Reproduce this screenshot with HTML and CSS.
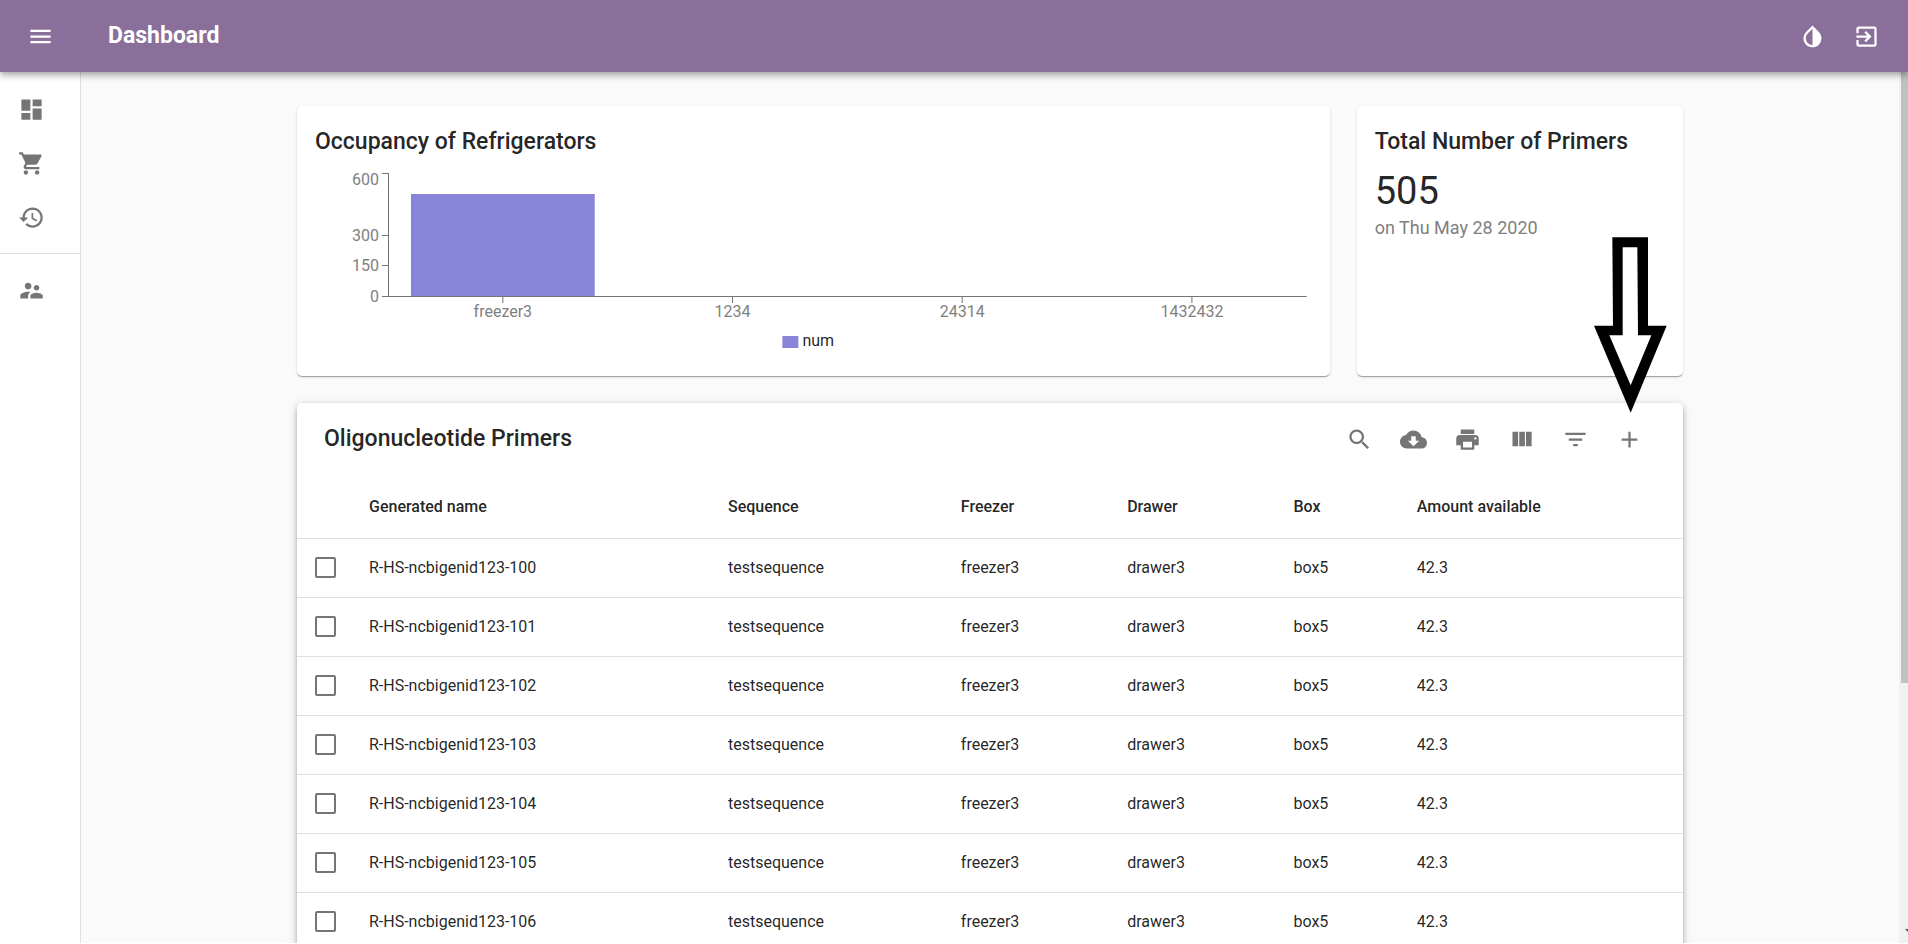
FILE: index.html
```html
<!DOCTYPE html>
<html lang="en">
<head>
<meta charset="utf-8">
<title>Dashboard</title>
<link rel="stylesheet" href="styles.css">
</head>
<body>
<div class="app">
  <header class="appbar">
    <button class="icon-button" type="button" aria-label="Toggle menu">
      <svg class="icon" viewBox="0 0 24 24"><path d="M3 18h18v-2H3v2zm0-5h18v-2H3v2zm0-7v2h18V6H3z"/></svg>
    </button>
    <h1 class="appbar-title">Dashboard</h1>
    <button class="icon-button" type="button" aria-label="Toggle theme">
      <svg class="icon" viewBox="0 0 24 24"><path d="M17.66 7.93L12 2.27 6.34 7.93c-3.12 3.12-3.12 8.19 0 11.31C7.9 20.8 9.95 21.58 12 21.58c2.05 0 4.1-.78 5.66-2.34 3.12-3.12 3.12-8.19 0-11.31zM12 19.59c-1.6 0-3.11-.62-4.24-1.76C6.62 16.69 6 15.19 6 13.59s.62-3.11 1.76-4.24L12 5.1v14.49z"/></svg>
    </button>
    <button class="icon-button" type="button" aria-label="Log out">
      <svg class="icon" viewBox="0 0 24 24"><path d="M10.09 15.59L11.5 17l5-5-5-5-1.41 1.41L12.67 11H3v2h9.67l-2.58 2.59zM19 3H5c-1.11 0-2 .9-2 2v4h2V5h14v14H5v-4H3v4c0 1.1.89 2 2 2h14c1.1 0 2-.9 2-2V5c0-1.1-.9-2-2-2z"/></svg>
    </button>
  </header>

  <div class="body">
    <nav class="drawer" aria-label="Main">
      <div class="nav-group">
        <a class="nav-item" href="#dashboard" aria-label="Dashboard"><svg class="icon" viewBox="0 0 24 24"><path d="M3 13h8V3H3v10zm0 8h8v-6H3v6zm10 0h8V11h-8v10zm0-18v6h8V3h-8z"/></svg></a>
        <a class="nav-item" href="#orders" aria-label="Orders"><svg class="icon" viewBox="0 0 24 24"><path d="M7 18c-1.1 0-1.99.9-1.99 2S5.9 22 7 22s2-.9 2-2-.9-2-2-2zM1 2v2h2l3.6 7.59-1.35 2.45c-.16.28-.25.61-.25.96 0 1.1.9 2 2 2h12v-2H7.42c-.14 0-.25-.11-.25-.25l.03-.12.9-1.63h7.45c.75 0 1.41-.41 1.75-1.03l3.58-6.49c.08-.14.12-.31.12-.48 0-.55-.45-1-1-1H5.21l-.94-2H1zm16 16c-1.1 0-1.99.9-1.99 2s.89 2 1.99 2 2-.9 2-2-.9-2-2-2z"/></svg></a>
        <a class="nav-item" href="#history" aria-label="History"><svg class="icon" viewBox="0 0 24 24"><path d="M13 3c-4.97 0-9 4.03-9 9H1l3.89 3.89.07.14L9 12H6c0-3.87 3.13-7 7-7s7 3.13 7 7-3.13 7-7 7c-1.93 0-3.68-.79-4.94-2.06l-1.42 1.42C8.27 19.99 10.51 21 13 21c4.97 0 9-4.03 9-9s-4.03-9-9-9zm-1 5v5l4.28 2.54.72-1.21-3.5-2.08V8H12z"/></svg></a>
      </div>
      <div class="nav-group">
        <a class="nav-item" href="#users" aria-label="Users"><svg class="icon" viewBox="0 0 24 24"><path d="M16.5 12c1.38 0 2.49-1.12 2.49-2.5S17.88 7 16.5 7 14 8.12 14 9.5s1.12 2.5 2.5 2.5zM9 11c1.66 0 2.99-1.34 2.99-3S10.66 5 9 5 6 6.34 6 8s1.34 3 3 3zm7.5 3c-1.83 0-5.5.92-5.5 2.75V19h11v-2.25c0-1.83-3.67-2.75-5.5-2.75zM9 13c-2.33 0-7 1.17-7 3.5V19h7v-2.25c0-.85.33-2.34 2.37-3.47C10.5 13.1 9.66 13 9 13z"/></svg></a>
      </div>
    </nav>

    <main class="main">
      <div class="container">
        <section class="card card-chart">
          <h2 class="title">Occupancy of Refrigerators</h2>
          <svg class="chart" role="img" aria-label="Occupancy of refrigerators">
            <g class="axis">
              <path d="M67 5.5h6.5M67 67.500h6.500M67 97.500h6.500M67 128.500h6.500M73.500 5v124"/>
            </g>
            <g class="tick tick-y">
              <text x="64" y="17">600</text>
              <text x="64" y="73">300</text>
              <text x="64" y="103">150</text>
              <text x="64" y="134">0</text>
            </g>
            <svg class="plot" x="73">
              <rect class="bar" x="2.5%" y="26" width="20%" height="103"/>
              <g class="axis">
                <line x1="0" y1="128.500" x2="100%" y2="128.500"/>
                <line x1="12.5%" y1="129" x2="12.5%" y2="135"/>
                <line x1="37.5%" y1="129" x2="37.5%" y2="135"/>
                <line x1="62.5%" y1="129" x2="62.5%" y2="135"/>
                <line x1="87.5%" y1="129" x2="87.5%" y2="135"/>
              </g>
              <g class="tick tick-x">
                <text x="12.5%" y="149">freezer3</text>
                <text x="37.5%" y="149">1234</text>
                <text x="62.5%" y="149">24314</text>
                <text x="87.5%" y="149">1432432</text>
              </g>
            </svg>
            <svg class="legend" x="50%">
              <rect class="bar" x="-31" y="168" width="16" height="12"/>
              <text x="-11" y="178">num</text>
            </svg>
          </svg>
        </section>

        <section class="card card-total">
          <h2 class="title">Total Number of Primers</h2>
          <p class="total">505</p>
          <p class="total-date">on Thu May 28 2020</p>
        </section>

        <section class="card card-table">
          <div class="toolbar">
            <h2 class="title toolbar-title">Oligonucleotide Primers</h2>
            <button class="icon-button" type="button" aria-label="Search"><svg class="icon" viewBox="0 0 24 24"><path d="M15.5 14h-.79l-.28-.27C15.41 12.590 16 11.110 16 9.500 16 5.910 13.090 3 9.500 3S3 5.910 3 9.500 5.910 16 9.500 16c1.610 0 3.090-.59 4.230-1.570l.27.28v.79l5 4.990L20.490 19l-4.990-5zm-6 0C7.010 14 5 11.990 5 9.500S7.010 5 9.500 5 14 7.010 14 9.500 11.990 14 9.500 14z"/></svg></button>
            <button class="icon-button" type="button" aria-label="Download"><svg class="icon" viewBox="0 0 24 24"><path d="M19.350 10.040C18.670 6.590 15.640 4 12 4 9.110 4 6.600 5.640 5.350 8.040 2.340 8.360 0 10.910 0 14c0 3.310 2.690 6 6 6h13c2.760 0 5-2.240 5-5 0-2.640-2.050-4.780-4.650-4.960zM17 13l-5 5-5-5h3V9h4v4h3z"/></svg></button>
            <button class="icon-button" type="button" aria-label="Print"><svg class="icon" viewBox="0 0 24 24"><path d="M19 8H5c-1.660 0-3 1.340-3 3v6h4v4h12v-4h4v-6c0-1.660-1.340-3-3-3zm-3 11H8v-5h8v5zm3-7c-.55 0-1-.45-1-1s.45-1 1-1 1 .45 1 1-.45 1-1 1zm-1-9H6v4h12V3z"/></svg></button>
            <button class="icon-button" type="button" aria-label="View columns"><svg class="icon" viewBox="0 0 24 24"><path d="M10 18h5V5h-5v13zm-6 0h5V5H4v13zM16 5v13h5V5h-5z"/></svg></button>
            <button class="icon-button" type="button" aria-label="Filter"><svg class="icon" viewBox="0 0 24 24"><path d="M10 18h4v-2h-4v2zM3 6v2h18V6H3zm3 7h12v-2H6v2z"/></svg></button>
            <button class="icon-button" type="button" aria-label="Add primer"><svg class="icon" viewBox="0 0 24 24"><path d="M19 13h-6v6h-2v-6H5v-2h6V5h2v6h6v2z"/></svg></button>
          </div>
          <table class="table">
            <colgroup><col class="col-check"><col class="col-name"><col class="col-seq"><col class="col-freezer"><col class="col-drawer"><col class="col-box"><col></colgroup>
            <thead>
              <tr><td></td><th scope="col">Generated name</th><th scope="col">Sequence</th><th scope="col">Freezer</th><th scope="col">Drawer</th><th scope="col">Box</th><th scope="col">Amount available</th></tr>
            </thead>
            <tbody>
              <tr><td class="check"><input type="checkbox" id="p100"></td><td><label for="p100">R-HS-ncbigenid123-100</label></td><td>testsequence</td><td>freezer3</td><td>drawer3</td><td>box5</td><td>42.3</td></tr>
              <tr><td class="check"><input type="checkbox" id="p101"></td><td><label for="p101">R-HS-ncbigenid123-101</label></td><td>testsequence</td><td>freezer3</td><td>drawer3</td><td>box5</td><td>42.3</td></tr>
              <tr><td class="check"><input type="checkbox" id="p102"></td><td><label for="p102">R-HS-ncbigenid123-102</label></td><td>testsequence</td><td>freezer3</td><td>drawer3</td><td>box5</td><td>42.3</td></tr>
              <tr><td class="check"><input type="checkbox" id="p103"></td><td><label for="p103">R-HS-ncbigenid123-103</label></td><td>testsequence</td><td>freezer3</td><td>drawer3</td><td>box5</td><td>42.3</td></tr>
              <tr><td class="check"><input type="checkbox" id="p104"></td><td><label for="p104">R-HS-ncbigenid123-104</label></td><td>testsequence</td><td>freezer3</td><td>drawer3</td><td>box5</td><td>42.3</td></tr>
              <tr><td class="check"><input type="checkbox" id="p105"></td><td><label for="p105">R-HS-ncbigenid123-105</label></td><td>testsequence</td><td>freezer3</td><td>drawer3</td><td>box5</td><td>42.3</td></tr>
              <tr><td class="check"><input type="checkbox" id="p106"></td><td><label for="p106">R-HS-ncbigenid123-106</label></td><td>testsequence</td><td>freezer3</td><td>drawer3</td><td>box5</td><td>42.3</td></tr>
            </tbody>
          </table>
          <svg class="pointer" viewBox="0 0 219 528" aria-hidden="true">
            <path class="pointer-fill" d="M70 16H147V280H195L110 486 24 280H70z"/>
            <path fill-rule="evenodd" d="M55 1H162V266H218L110 527 0 266H57zM86 31V295H46L110 445 172 295H132L130 31z"/>
          </svg>
        </section>
      </div>
    </main>

    <div class="scrollbar" aria-hidden="true">
      <div class="scroll-thumb"></div>
      <div class="scroll-arrow"></div>
    </div>
  </div>
</div>
</body>
</html>
```
FILE: styles.css
```css
* {
  box-sizing: border-box;
}

body {
  margin: 0;
  background: #fff;
  color: rgba(0, 0, 0, 0.87);
  font-family: Roboto, "Liberation Sans", sans-serif;
  font-size: 16px;
  line-height: 24px;
}

h1,
h2,
p {
  margin: 0;
}

.app {
  display: flex;
  flex-direction: column;
  height: calc(100vh - 1px);
  overflow: hidden;
}

.appbar {
  display: flex;
  flex: none;
  align-items: center;
  height: 72px;
  padding: 0 15px 0 13px;
  background: #896f99;
  color: #fff;
  z-index: 2;
  box-shadow: 0 2px 5px -1px rgba(0, 0, 0, 0.2), 0 5px 6px 0 rgba(0, 0, 0, 0.14), 0 1px 11px 0 rgba(0, 0, 0, 0.12);
}

.appbar-title {
  flex: 1;
  margin-left: 41px;
  font-size: 23px;
  font-weight: 700;
  line-height: 36px;
}

.icon-button {
  display: flex;
  flex: none;
  align-items: center;
  justify-content: center;
  width: 54px;
  height: 54px;
  padding: 0;
  border: 0;
  border-radius: 50%;
  background: none;
  color: inherit;
}

.icon {
  display: block;
  width: 27px;
  height: 27px;
  fill: currentColor;
}

.body {
  display: flex;
  flex: 1;
  min-height: 0;
  background: #fafafa;
}

.drawer {
  flex: none;
  width: 81px;
  border-right: 1px solid #e0e0e0;
  background: #fff;
  color: #757575;
}

.nav-group {
  padding: 10px 0 9px;
}

.nav-group + .nav-group {
  border-top: 1px solid #e0e0e0;
  padding-top: 9px;
}

.nav-item {
  display: flex;
  align-items: center;
  height: 54px;
  padding: 0 18px;
  color: inherit;
}

.main {
  flex: 1;
  min-width: 0;
  overflow: hidden;
}

.container {
  display: grid;
  grid-template-columns: repeat(12, 1fr);
  gap: 27px;
  max-width: 1440px;
  margin: 0 auto;
  padding: 34px 27px;
}

.card {
  padding: 18px;
  border-radius: 5px;
  background: #fff;
}

.card-chart,
.card-total {
  box-shadow: 0 2px 1px -1px rgba(0, 0, 0, 0.2), 0 1px 1px 0 rgba(0, 0, 0, 0.14), 0 1px 3px 0 rgba(0, 0, 0, 0.12);
}

.card-chart {
  grid-column: span 9;
}

.card-total {
  grid-column: span 3;
}

.card-table {
  position: relative;
  grid-column: span 12;
  padding: 0;
  box-shadow: 0 2px 5px -1px rgba(0, 0, 0, 0.2), 0 5px 6px 0 rgba(0, 0, 0, 0.14), 0 1px 11px 0 rgba(0, 0, 0, 0.12);
}

.title {
  margin-bottom: 8px;
  font-size: 23px;
  font-weight: 500;
  line-height: 36px;
}

.chart {
  display: block;
  width: 100%;
  height: 190px;
  overflow: visible;
}

.plot {
  width: calc(100% - 78px);
  overflow: visible;
}

.legend {
  overflow: visible;
  fill: rgba(0, 0, 0, 0.87);
}

.bar {
  fill: #8884d8;
}

.axis {
  fill: none;
  stroke: #757575;
  stroke-width: 1px;
}

.tick {
  fill: #808080;
}

.tick-y {
  text-anchor: end;
}

.tick-x {
  text-anchor: middle;
}

.total {
  font-size: 38px;
  line-height: 47px;
}

.total-date {
  color: #808080;
  font-size: 18px;
  line-height: 26px;
}

.toolbar {
  display: flex;
  align-items: center;
  min-height: 72px;
  padding: 0 27px;
  color: #757575;
}

.toolbar-title {
  flex: 1;
  margin: 0;
  color: rgba(0, 0, 0, 0.87);
}

.table {
  width: 100%;
  border-collapse: separate;
  border-spacing: 0;
  table-layout: fixed;
}

.col-check {
  width: 54px;
}

.col-name {
  width: 25.9%;
}

.col-seq {
  width: 16.8%;
}

.col-freezer,
.col-drawer {
  width: 12%;
}

.col-box {
  width: 8.9%;
}

.table th,
.table td {
  height: 59px;
  padding: 0 18px;
  border-bottom: 1px solid #e0e0e0;
  text-align: left;
  white-space: nowrap;
}

.table th {
  height: 64px;
  font-weight: 500;
}

.table .check {
  padding-right: 0;
  padding-bottom: 2px;
}

.check input {
  display: block;
  appearance: none;
  width: 21px;
  height: 21px;
  margin: 0;
  border: 2px solid #757575;
  border-radius: 2px;
  background: #fff;
}

.check input:checked {
  background: #757575;
}

/* Callout that points at the add button, over both cards. */
.pointer {
  position: absolute;
  top: -166px;
  right: 16px;
  width: 73px;
  height: 176px;
  pointer-events: none;
}

.pointer-fill {
  fill: #fff;
}

.scrollbar {
  display: flex;
  flex: none;
  flex-direction: column;
  justify-content: space-between;
  align-items: flex-end;
  width: 9px;
  padding-bottom: 11px;
  background: #f1f1f1;
  overflow: hidden;
}

.scroll-thumb {
  width: 7px;
  height: 71%;
  background: #c1c1c1;
}

.scroll-arrow {
  width: 3px;
  height: 3px;
  background: #505050;
  clip-path: polygon(0 0, 100% 0, 100% 100%);
}
```
